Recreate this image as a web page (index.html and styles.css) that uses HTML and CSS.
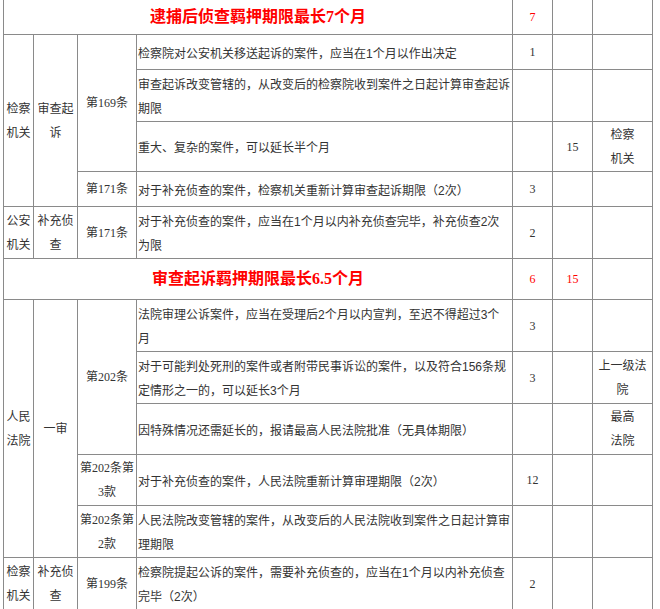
FILE: index.html
```html
<!DOCTYPE html>
<html lang="zh">
<head>
<meta charset="utf-8">
<title>羁押期限</title>
<link rel="stylesheet" href="styles.css">
</head>
<body>
<table class="grid">
  <colgroup>
    <col class="c1"><col class="c2"><col class="c3"><col class="c4"><col class="c5"><col class="c6"><col class="c7">
  </colgroup>
  <tr class="h35">
    <td colspan="4" class="title">逮捕后侦查羁押期限最长7个月</td>
    <td class="num red">7</td><td></td><td></td>
  </tr>
  <tr class="h35">
    <td rowspan="4" class="ctr">检察<br>机关</td>
    <td rowspan="4" class="ctr">审查起<br>诉</td>
    <td rowspan="3" class="ctr">第169条</td>
    <td class="desc">检察院对公安机关移送起诉的案件，应当在1个月以作出决定</td>
    <td class="num">1</td><td></td><td></td>
  </tr>
  <tr class="h52">
    <td class="desc">审查起诉改变管辖的，从改变后的检察院收到案件之日起计算审查起诉期限</td>
    <td></td><td></td><td></td>
  </tr>
  <tr class="h50">
    <td class="desc">重大、复杂的案件，可以延长半个月</td>
    <td></td><td class="num">15</td><td class="ctr">检察<br>机关</td>
  </tr>
  <tr class="h35">
    <td class="ctr">第171条</td>
    <td class="desc">对于补充侦查的案件，检察机关重新计算审查起诉期限（2次）</td>
    <td class="num">3</td><td></td><td></td>
  </tr>
  <tr class="h51">
    <td class="ctr">公安<br>机关</td>
    <td class="ctr">补充侦<br>查</td>
    <td class="ctr">第171条</td>
    <td class="desc">对于补充侦查的案件，应当在1个月以内补充侦查完毕，补充侦查2次为限</td>
    <td class="num">2</td><td></td><td></td>
  </tr>
  <tr class="h41">
    <td colspan="4" class="title">审查起诉羁押期限最长6.5个月</td>
    <td class="num red">6</td><td class="num red">15</td><td></td>
  </tr>
  <tr class="h51">
    <td rowspan="5" class="ctr">人民<br>法院</td>
    <td rowspan="5" class="ctr">一审</td>
    <td rowspan="3" class="ctr">第202条</td>
    <td class="desc">法院审理公诉案件，应当在受理后2个月以内宣判，至迟不得超过3个月</td>
    <td class="num">3</td><td></td><td></td>
  </tr>
  <tr class="h51">
    <td class="desc">对于可能判处死刑的案件或者附带民事诉讼的案件，以及符合156条规定情形之一的，可以延长3个月</td>
    <td class="num">3</td><td></td><td class="ctr">上一级法<br>院</td>
  </tr>
  <tr class="h51">
    <td class="desc">因特殊情况还需延长的，报请最高人民法院批准（无具体期限）</td>
    <td></td><td></td><td class="ctr">最高<br>法院</td>
  </tr>
  <tr class="h51">
    <td class="ctr">第202条第<br>3款</td>
    <td class="desc">对于补充侦查的案件，人民法院重新计算审理期限（2次）</td>
    <td class="num">12</td><td></td><td></td>
  </tr>
  <tr class="h51">
    <td class="ctr">第202条第<br>2款</td>
    <td class="desc">人民法院改变管辖的案件，从改变后的人民法院收到案件之日起计算审理期限</td>
    <td></td><td></td><td></td>
  </tr>
  <tr class="h51">
    <td class="ctr">检察<br>机关</td>
    <td class="ctr">补充侦<br>查</td>
    <td class="ctr">第199条</td>
    <td class="desc">检察院提起公诉的案件，需要补充侦查的，应当在1个月以内补充侦查完毕（2次）</td>
    <td class="num">2</td><td></td><td></td>
  </tr>
  <tr class="h35">
    <td colspan="4"></td><td></td><td></td><td></td>
  </tr>
</table>
</body>
</html>
```
FILE: styles.css
```css
html, body {
  margin: 0;
  padding: 0;
  background: #ffffff;
}
body {
  height: 609px;
  overflow: hidden;
}
.grid {
  margin: -1px 0 0 3px;
  width: 650px;
  table-layout: fixed;
  border-collapse: collapse;
  font-family: "Liberation Serif", "Noto Sans CJK SC", serif;
  font-size: 12px;
  line-height: 24px;
  color: #333333;
}
.c1 { width: 30px; }
.c2 { width: 44px; }
.c3 { width: 59px; }
.c4 { width: 376px; }
.c5 { width: 40px; }
.c6 { width: 40px; }
.c7 { width: 60px; }
.grid td {
  border: 1px solid #8a8a8a;
  padding: 0;
  vertical-align: middle;
  text-align: center;
}
.h35 { height: 35px; }
.h41 { height: 41px; }
.h50 { height: 50px; }
.h51 { height: 51px; }
.h52 { height: 52px; }
.grid td.desc {
  text-align: left;
  padding: 3px 2px 0 1px;
  font-family: "Liberation Sans", "Noto Sans CJK SC", sans-serif;
}
.grid td.title {
  color: #ff0000;
  font-weight: bold;
  font-size: 16px;
}
.num {
  font-family: "Liberation Serif", serif;
}
.grid td.red {
  color: #ff0000;
}
```
